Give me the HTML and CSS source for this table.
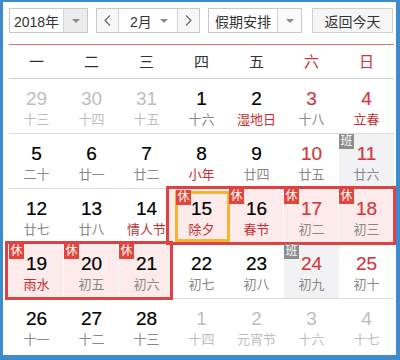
FILE: index.html
```html
<!DOCTYPE html>
<html lang="zh">
<head>
<meta charset="utf-8">
<link rel="stylesheet" href="styles.css">
</head>
<body>
<div class="frame">
  <div class="toolbar">
    <div class="sel year">
      <span class="sel-text">2018年</span>
      <span class="sel-arrow gray"><i class="tri"></i></span>
    </div>
    <div class="sel month">
      <span class="nav"><svg width="7" height="11" viewBox="0 0 7 11"><polyline points="6,0.5 1,5.5 6,10.5" fill="none" stroke="#666" stroke-width="1.2"/></svg></span>
      <span class="month-mid"><span>2月</span><i class="tri"></i></span>
      <span class="nav"><svg width="7" height="11" viewBox="0 0 7 11"><polyline points="1,0.5 6,5.5 1,10.5" fill="none" stroke="#666" stroke-width="1.2"/></svg></span>
    </div>
    <div class="sel holiday">
      <span class="sel-text">假期安排</span>
      <span class="sel-arrow"><i class="tri"></i></span>
    </div>
    <div class="btn">返回今天</div>
  </div>

  <div class="weekhead">
    <span>一</span><span>二</span><span>三</span><span>四</span><span>五</span><span class="red">六</span><span class="red">日</span>
  </div>

  <div class="days">
    <div class="box-fill b1"></div>
    <div class="box-fill b2"></div>
    <div class="box-line b1"></div>
    <div class="box-line b2"></div>

    <div class="cell fade"><b>29</b><span>十三</span></div>
    <div class="cell fade"><b>30</b><span>十四</span></div>
    <div class="cell fade"><b>31</b><span>十五</span></div>
    <div class="cell"><b>1</b><span>十六</span></div>
    <div class="cell"><b>2</b><span class="fest">湿地日</span></div>
    <div class="cell we"><b>3</b><span>十八</span></div>
    <div class="cell we"><b>4</b><span class="fest">立春</span></div>

    <div class="cell"><b>5</b><span>二十</span></div>
    <div class="cell"><b>6</b><span>廿一</span></div>
    <div class="cell"><b>7</b><span>廿二</span></div>
    <div class="cell"><b>8</b><span class="fest">小年</span></div>
    <div class="cell"><b>9</b><span>廿四</span></div>
    <div class="cell we"><b>10</b><span>廿五</span></div>
    <div class="cell we work"><em class="badge ban">班</em><b>11</b><span>廿六</span></div>

    <div class="cell"><b>12</b><span>廿七</span></div>
    <div class="cell"><b>13</b><span>廿八</span></div>
    <div class="cell"><b>14</b><span class="fest">情人节</span></div>
    <div class="cell hol today"><em class="badge">休</em><b>15</b><span class="fest">除夕</span></div>
    <div class="cell hol"><em class="badge">休</em><b>16</b><span class="fest">春节</span></div>
    <div class="cell hol we"><em class="badge">休</em><b>17</b><span>初二</span></div>
    <div class="cell hol we last"><em class="badge">休</em><b>18</b><span>初三</span></div>

    <div class="cell hol"><em class="badge">休</em><b>19</b><span class="fest">雨水</span></div>
    <div class="cell hol"><em class="badge">休</em><b>20</b><span>初五</span></div>
    <div class="cell hol last"><em class="badge">休</em><b>21</b><span>初六</span></div>
    <div class="cell"><b>22</b><span>初七</span></div>
    <div class="cell"><b>23</b><span>初八</span></div>
    <div class="cell we work"><em class="badge ban">班</em><b>24</b><span>初九</span></div>
    <div class="cell we"><b>25</b><span>初十</span></div>

    <div class="cell lastrow"><b>26</b><span>十一</span></div>
    <div class="cell lastrow"><b>27</b><span>十二</span></div>
    <div class="cell lastrow"><b>28</b><span>十三</span></div>
    <div class="cell lastrow fade"><b>1</b><span>十四</span></div>
    <div class="cell lastrow fade"><b>2</b><span>元宵节</span></div>
    <div class="cell lastrow fade"><b>3</b><span>十六</span></div>
    <div class="cell lastrow fade"><b>4</b><span>十七</span></div>
  </div>
</div>
</body>
</html>
```

FILE: styles.css
```css
html, body {
  margin: 0;
  padding: 0;
  background: #fff;
}

body {
  font-family: "Liberation Sans", "Noto Sans CJK SC", sans-serif;
  color: #000;
}

.frame {
  width: 400px;
  height: 360px;
  box-sizing: border-box;
  border-style: solid;
  border-color: #3d8bcd;
  border-width: 2px 4px 5px 3px;
  padding: 6px 0 0 6px;
  background: #fff;
  overflow: hidden;
}

/* toolbar */
.toolbar {
  display: flex;
  height: 25px;
}

.sel {
  display: flex;
  box-sizing: border-box;
  height: 25px;
  border: 1px solid #c8c8c8;
  background: #fff;
  font-size: 14px;
  color: #333;
}

.sel-text {
  flex: 1;
  display: flex;
  align-items: center;
  justify-content: center;
}

.sel-arrow {
  width: 23px;
  border-left: 1px solid #d4d4d4;
  display: flex;
  align-items: center;
  justify-content: center;
  background: #fafafa;
}

.sel-arrow.gray {
  background: #ececec;
}

.tri {
  display: block;
  width: 0;
  height: 0;
  border-left: 4px solid transparent;
  border-right: 4px solid transparent;
  border-top: 4px solid #8a8a8a;
}

.year {
  width: 79px;
}

.month {
  width: 104px;
  margin-left: 8px;
}

.nav {
  width: 21px;
  display: flex;
  align-items: center;
  justify-content: center;
  background: #f7f7f7;
}

.nav:first-child {
  border-right: 1px solid #d4d4d4;
}

.nav:last-child {
  border-left: 1px solid #d4d4d4;
}

.month-mid {
  flex: 1;
  display: flex;
  align-items: center;
  padding: 0 9px 0 11px;
  justify-content: space-between;
}

.holiday {
  width: 94px;
  margin-left: 8px;
}

.btn {
  width: 81px;
  height: 25px;
  box-sizing: border-box;
  margin-left: 10px;
  border: 1px solid #cfcfcf;
  background: #f5f5f5;
  font-size: 14px;
  color: #333;
  display: flex;
  align-items: center;
  justify-content: center;
}

/* week header */
.weekhead {
  width: 385px;
  margin-top: 11px;
  border-top: 1px solid #d87070;
  border-bottom: 1px solid #cfcfcf;
  display: grid;
  grid-template-columns: repeat(7, 55px);
  height: 33px;
  line-height: 33px;
  font-size: 15px;
  color: #333;
  text-align: center;
}

.weekhead .red {
  color: #c9353b;
}

/* days */
.days {
  position: relative;
  z-index: 0;
  width: 385px;
  display: grid;
  grid-template-columns: repeat(7, 55px);
  grid-auto-rows: 55px;
  background: #fff;
}

.cell {
  position: relative;
  box-sizing: border-box;
  border-bottom: 1px solid #dcdcdc;
  padding-top: 9px;
  display: flex;
  flex-direction: column;
  align-items: center;
}

.cell.lastrow {
  border-bottom: 0;
}

.cell b {
  font-weight: normal;
  font-size: 19px;
  line-height: 22px;
  color: #000;
  -webkit-text-stroke: 0.2px currentColor;
}

.cell span {
  margin-top: 2px;
  font-size: 13px;
  line-height: 16px;
  color: #888;
}

.cell.we b {
  color: #d1393f;
}

.cell span.fest {
  color: #bf2f33;
}

.cell.fade b,
.cell.fade span {
  color: #bdbdbd;
}

.cell.fade b {
  -webkit-text-stroke: 0;
}

.cell.work {
  background: #f2f2f4;
}

.cell.hol {
  box-shadow: inset -1px 0 0 rgba(255, 255, 255, 0.85);
}

.cell.hol.last {
  box-shadow: none;
}

.cell.today::before {
  content: "";
  position: absolute;
  top: 2px;
  left: 1px;
  right: -1px;
  bottom: 1px;
  border: 3px solid #f3b532;
}

.badge {
  position: absolute;
  z-index: 3;
  left: 0;
  top: 0;
  width: 15px;
  height: 15px;
  font-style: normal;
  font-size: 12px;
  line-height: 15px;
  text-align: center;
  color: #fff;
  background: #e2453c;
}

.badge.ban {
  background: #8d8d8d;
}

.cell.today .badge {
  left: 2px;
  top: 1px;
}

/* holiday range overlays */
.box-fill,
.box-line {
  position: absolute;
  box-sizing: border-box;
}

.box-fill {
  z-index: -1;
  background: #fdeaea;
}

.box-line {
  z-index: 2;
  border: 3px solid #dc4444;
}

.b1 {
  left: 157px;
  top: 107px;
  width: 230px;
  height: 59px;
}

.b2 {
  left: -4px;
  top: 162px;
  width: 168px;
  height: 59px;
}
```
